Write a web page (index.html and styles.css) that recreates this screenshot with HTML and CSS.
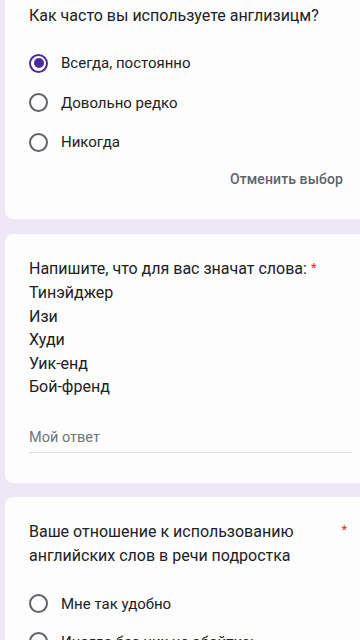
FILE: index.html
```html
<!DOCTYPE html>
<html lang="ru">
<head>
<meta charset="utf-8">
<link rel="stylesheet" href="styles.css">
</head>
<body>
<div class="page">
  <section class="card card-first">
    <div class="q-title">Как часто вы используете англизицм?</div>
    <div class="options">
      <div class="option"><span class="radio checked"></span><span class="label">Всегда, постоянно</span></div>
      <div class="option"><span class="radio"></span><span class="label">Довольно редко</span></div>
      <div class="option"><span class="radio"></span><span class="label">Никогда</span></div>
    </div>
    <div class="clear-row"><span class="clear">Отменить выбор</span></div>
  </section>

  <section class="card card-text">
    <div class="q-title">Напишите, что для вас значат слова: <span class="req">*</span></div>
    <div class="words">
      <div>Тинэйджер</div>
      <div>Изи</div>
      <div>Худи</div>
      <div>Уик-енд</div>
      <div>Бой-френд</div>
    </div>
    <div class="answer">Мой ответ</div>
  </section>

  <section class="card card-last">
    <div class="title-row">
      <div class="q-title narrow">Ваше отношение к использованию английских слов в речи подростка</div>
      <span class="req req-right">*</span>
    </div>
    <div class="options options-last">
      <div class="option"><span class="radio"></span><span class="label">Мне так удобно</span></div>
      <div class="option"><span class="radio"></span><span class="label">Иногда без них не обойтись</span></div>
    </div>
  </section>
</div>
</body>
</html>
```

FILE: styles.css
```css
html, body {
  margin: 0;
  padding: 0;
}
body {
  background: #ede7f6;
  font-family: Roboto, "Noto Sans", Arial, sans-serif;
  color: #202124;
  width: 360px;
  height: 640px;
  overflow: hidden;
}
.page {
  padding-left: 5px;
  display: flex;
  flex-direction: column;
  gap: 14px;
}
.card {
  background: #fdfdfd;
  border-radius: 8px 0 0 8px;
  padding-left: 24px;
  padding-right: 8px;
}
.card-first {
  margin-top: -20px;
  padding-top: 24px;
  padding-bottom: 28px;
  margin-bottom: 1px;
}
.q-title {
  font-size: 16px;
  line-height: 24px;
  font-weight: 400;
}
.options {
  display: flex;
  flex-direction: column;
  gap: 15.5px;
  margin-top: 23px;
}
.option {
  display: flex;
  align-items: center;
  height: 24px;
}
.radio {
  box-sizing: border-box;
  width: 19px;
  height: 19px;
  border: 2px solid #5f6368;
  border-radius: 50%;
  margin-right: 13px;
  position: relative;
  flex: none;
}
.radio.checked {
  border-color: #4a2d9c;
}
.radio.checked::after {
  content: "";
  position: absolute;
  left: 2.5px;
  top: 2.5px;
  width: 10px;
  height: 10px;
  border-radius: 50%;
  background: #4a2d9c;
}
.label {
  font-size: 15px;
  line-height: 20px;
}
.clear-row {
  display: flex;
  justify-content: flex-end;
  margin-top: 13px;
  padding-right: 9px;
}
.clear {
  font-size: 14px;
  line-height: 24px;
  font-weight: 500;
  color: #5f6368;
  letter-spacing: 0.1px;
}
.card-text {
  padding-top: 22px;
  padding-bottom: 30px;
}
.req {
  color: #d93025;
  font-size: 13px;
  vertical-align: 2px;
}
.words {
  font-size: 16px;
  line-height: 23.6px;
}
.answer {
  margin-top: 29px;
  font-size: 14.5px;
  line-height: 20px;
  color: #70757a;
  padding-bottom: 4px;
  border-bottom: 1px solid #dadce0;
}
.card-last {
  padding-top: 23px;
  height: 200px;
}
.title-row {
  display: flex;
  justify-content: space-between;
  align-items: flex-start;
}
.narrow {
  width: 300px;
}
.req-right {
  line-height: 20px;
  margin-right: 5px;
}
.options-last {
  margin-top: 24px;
  gap: 14px;
}
```
